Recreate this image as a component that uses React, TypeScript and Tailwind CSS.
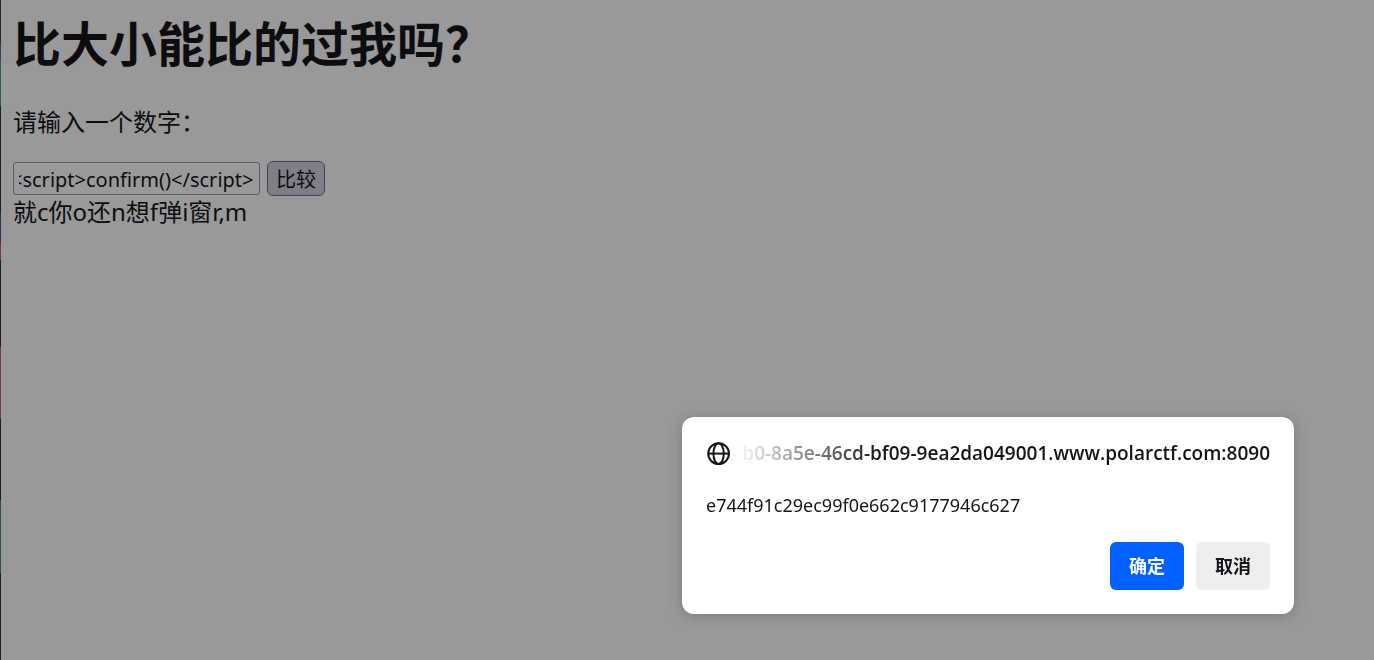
import { useEffect, useRef, useState } from "react";

function GlobeIcon() {
  return (
    <svg
      viewBox="0 0 24 24"
      className="size-6 shrink-0"
      fill="none"
      stroke="#15141a"
      strokeWidth="2"
      aria-hidden="true"
    >
      <circle cx="12.6" cy="12.6" r="10.4" />
      <ellipse cx="12.6" cy="12.6" rx="5.2" ry="10.4" />
      <path d="M2.2 12.6H23" />
    </svg>
  );
}

function CompareForm() {
  const [value, setValue] = useState("<script>confirm()</script>");
  const field = useRef<HTMLInputElement>(null);

  // Keep the end of a long value in view.
  useEffect(() => {
    if (field.current) field.current.scrollLeft = field.current.scrollWidth;
  }, []);

  return (
    <form className="flex items-center gap-[7px]" onSubmit={(e) => e.preventDefault()}>
      <input
        ref={field}
        id="number"
        type="text"
        value={value}
        onChange={(e) => setValue(e.target.value)}
        className="h-[33px] w-[247px] rounded-[3px] border border-[#5a5963] bg-transparent px-[5px] pt-0.5 text-[20px] leading-7 outline-none"
      />
      <button
        type="submit"
        className="h-[35px] w-[58px] rounded-md border border-[#45444d] bg-[#7f7e87] pt-0.5 text-[20px] leading-7"
      >
        比较
      </button>
    </form>
  );
}

function ConfirmDialog() {
  return (
    <div
      role="dialog"
      aria-labelledby="dialog-origin"
      aria-describedby="dialog-message"
      className="fixed right-20 bottom-[46px] w-[612px] rounded-xl bg-white p-6 text-[18px] leading-6 text-[#15141a] shadow-[0_2px_14px_rgba(30,30,40,0.25)]"
    >
      <div className="flex items-center gap-1">
        <GlobeIcon />
        <div className="flex min-w-0 flex-1 justify-end overflow-hidden [mask-image:linear-gradient(to_right,transparent,black_144px)]">
          <h2 id="dialog-origin" className="font-['Open_Sans',sans-serif] text-[19px] leading-6 font-semibold whitespace-nowrap">
            b0-8a5e-46cd-bf09-9ea2da049001.www.polarctf.com:8090
          </h2>
        </div>
      </div>
      <p id="dialog-message" className="mt-7">
        e744f91c29ec99f0e662c9177946c627
      </p>
      <div className="mt-[25px] flex justify-end gap-3 font-bold">
        <button type="button" className="h-12 w-[74px] rounded-md bg-[#0061fe] text-[#fbfbfe]">
          确定
        </button>
        <button type="button" className="h-12 w-[74px] rounded-md bg-[#eeeeee]">
          取消
        </button>
      </div>
    </div>
  );
}

export default function App() {
  return (
    <div className="flex min-h-screen bg-[#99999a] font-['Noto_Sans','Noto_Sans_CJK_SC',sans-serif] text-[#0d0d10]">
      <div className="w-px bg-[linear-gradient(to_bottom,#1c2a2e_0_43px,#27435e_43px_59px,#1f5f63_59px_106px,#1b2326_106px_213px,#3b2a56_213px_243px,#7a3540_243px_260px,#1b1d20_260px_347px,#78394f_347px_419px,#1b1d20_419px_500px,#2c5539_500px_573px,#172226_573px)]" />
      <main className="px-3 pt-3">
        <h1 className="text-[48px] leading-16 font-bold">比大小能比的过我吗？</h1>
        <label htmlFor="number" className="mt-7 mb-[21px] block text-2xl leading-9">
          请输入一个数字：
        </label>
        <CompareForm />
        <p className="text-2xl leading-8">就c你o还n想f弹i窗r,m</p>
      </main>
      <ConfirmDialog />
    </div>
  );
}
